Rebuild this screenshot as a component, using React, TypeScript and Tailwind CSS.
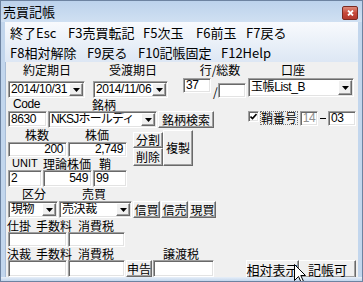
import React from 'react';

const sunk =
  'bg-white border border-t-[#a0a0a0] border-l-[#a0a0a0] border-r-white border-b-white shadow-[inset_1px_1px_0_#696969,inset_-1px_-1px_0_#e3e3e3] flex items-center overflow-hidden shrink-0';
const raised =
  'bg-[#f0f0f0] border border-t-white border-l-white border-r-[#696969] border-b-[#696969] shadow-[inset_-1px_-1px_0_#a0a0a0] flex items-center justify-center shrink-0 whitespace-nowrap';
const num = "font-['Liberation_Sans','Noto_Sans_CJK_JP',sans-serif] text-[12px] leading-[13px] tracking-[-0.4px]";

const DropBtn = () => (
  <div className={`${raised} w-[14px] h-full`}>
    <svg width="7" height="4" viewBox="0 0 7 4">
      <path d="M0 0h7L3.5 4z" fill="#000" />
    </svg>
  </div>
);

const Combo = ({ className, text, textClass = '' }: { className: string; text: string; textClass?: string }) => (
  <div className={`${sunk} ${className} p-[1px] pl-[2px] items-stretch`}>
    <div className={`${num} ${textClass} flex-1 flex items-center whitespace-nowrap overflow-hidden`}>{text}</div>
    <DropBtn />
  </div>
);

const Field = ({ className, text = '', right = false }: { className: string; text?: string; right?: boolean }) => (
  <div className={`${sunk} ${className} ${right ? 'justify-end pr-[3px]' : 'pl-[2px]'}`}>
    <span className={`${num} text-black`}>{text}</span>
  </div>
);

const Btn = ({ className, text }: { className: string; text: string }) => (
  <div className={`${raised} ${className} text-[12px] leading-none`}>{text}</div>
);

const Label = ({ className, text }: { className: string; text: string }) => (
  <span className={`${className} text-[12px] leading-none whitespace-nowrap text-center shrink-0`}>{text}</span>
);

export default function App() {
  return (
    <div className="w-[363px] h-[282px] relative overflow-hidden bg-[#c2d6ed] border border-[#6d83a1] flex flex-col text-black font-['Noto_Sans_CJK_JP',sans-serif]">
      {/* title bar */}
      <div className="h-[21px] shrink-0 flex items-center pl-[2px] bg-gradient-to-b from-[#bcd2ec] to-[#d0e0f2] relative">
        <span className="text-[13px] leading-none">売買記帳</span>
        <div className="absolute right-[4px] top-[5px] w-[16px] h-[14px] rounded-[2px] border border-[#7a2a22] bg-gradient-to-b from-[#dc8a7c] via-[#c6483a] to-[#b33a2e] flex items-center justify-center">
          <svg width="7" height="6" viewBox="0 0 7 6">
            <path d="M1 0.5L6 5.5M6 0.5L1 5.5" stroke="#fff" strokeWidth="1.8" />
          </svg>
        </div>
      </div>

      <div className="mx-[4px] flex-1 flex flex-col">
        {/* menu */}
        <div className="h-[40px] shrink-0 flex flex-col bg-gradient-to-b from-[#f8fafd] to-[#dde7f4] text-[13px] leading-none">
          <div className="h-[20px] flex items-center pl-[5px]">
            <span className="w-[58px]">終了Esc</span>
            <span className="w-[75px]">F3売買転記</span>
            <span className="w-[53px]">F5次玉</span>
            <span className="w-[50px]">F6前玉</span>
            <span>F7戻る</span>
          </div>
          <div className="h-[20px] flex items-center pl-[5px]">
            <span className="w-[77px]">F8相対解除</span>
            <span className="w-[51px]">F9戻る</span>
            <span className="w-[83px]">F10記帳固定</span>
            <span>F12Help</span>
          </div>
        </div>

        {/* form */}
        <div className="flex-1 bg-[#f0f0f0] flex flex-col border-l border-[#a9bdd6]">
          <div className="h-[16px] flex items-center">
            <Label className="ml-[17px] w-[48px]" text="約定期日" />
            <Label className="ml-[38px] w-[48px]" text="受渡期日" />
            <Label className="ml-[42px] w-[42px]" text="行/総数" />
            <Label className="ml-[40px] w-[24px]" text="口座" />
          </div>
          <div className="h-[20px] flex items-start">
            <Combo className="ml-[2px] mt-[3px] w-[77px] h-[17px]" text="2014/10/31" />
            <Combo className="ml-[8px] mt-[3px] w-[75px] h-[17px]" text="2014/11/06" />
            <Field className="ml-[15px] w-[28px] h-[15px]" text="37" />
            <span className="ml-[2px] mt-[8px] w-[5px] text-[12px] leading-none">/</span>
            <Field className="w-[28px] mt-[5px] h-[15px]" />
            <Combo className="ml-[2px] w-[106px] h-[19px]" text="玉帳List_B" />
          </div>
          <div className="h-[13px] flex items-center">
            <span className={`${num} ml-[7px] w-[30px]`}>Code</span>
            <Label className="ml-[49px] w-[24px]" text="銘柄" />
          </div>
          <div className="h-[17px] flex items-start">
            <Field className="ml-[2px] w-[39px] h-[16px]" text="8630" />
            <Combo className="ml-[1px] w-[109px] h-[17px]" text="NKSJホールディ" textClass="text-[11.5px] tracking-[-0.8px]" />
            <Btn className="ml-[1px] w-[56px] h-[17px]" text="銘柄検索" />
            <div className={`${sunk} ml-[34px] w-[11px] h-[11px] justify-center`}>
              <svg width="7" height="7" viewBox="0 0 7 7">
                <path d="M0.5 3.5L2.5 5.5L6.5 1" stroke="#000" strokeWidth="1.6" fill="none" />
              </svg>
            </div>
            <span className="ml-[1px] w-[38px] text-[12px] leading-[12px] text-center border border-dotted border-[#777]">鞘番号</span>
            <div className={`${sunk} ml-[2px] w-[18px] h-[15px] justify-center`}>
              <span className={`${num} text-[#909090]`}>14</span>
            </div>
            <span className="ml-[2px] mt-[7px] w-[6px] h-[1px] bg-black" />
            <Field className="ml-[2px] w-[28px] h-[15px]" text="03" />
          </div>

          <div className="h-[59px] flex items-start">
            <div className="flex flex-col w-[123px]">
              <div className="h-[14px] flex items-center">
                <Label className="ml-[19px] w-[24px]" text="株数" />
                <Label className="ml-[36px] w-[24px]" text="株価" />
              </div>
              <div className="h-[15px] flex">
                <Field className="ml-[2px] w-[59px] h-[15px]" text="200" right />
                <Field className="ml-[1px] w-[59px] h-[15px]" text="2,749" right />
              </div>
              <div className="h-[13px] flex items-center">
                <span className="font-['Liberation_Sans',sans-serif] text-[11px] leading-none ml-[6px] w-[27px] shrink-0">UNIT</span>
                <Label className="ml-[4px] w-[48px]" text="理論株価" />
                <Label className="ml-[8px] w-[12px]" text="鞘" />
              </div>
              <div className="h-[17px] flex">
                <Field className="ml-[2px] w-[34px] h-[17px]" text="2" />
                <Field className="ml-[1px] w-[49px] h-[17px]" text="549" right />
                <Field className="ml-[1px] w-[34px] h-[17px]" text="99" />
              </div>
            </div>
            <div className="flex flex-col ml-[4px] mt-[4px]">
              <Btn className="w-[30px] h-[16px]" text="分割" />
              <Btn className="w-[30px] h-[18px]" text="削除" />
            </div>
            <Btn className="mt-[2px] w-[30px] h-[36px]" text="複製" />
          </div>

          <div className="h-[14px] flex items-center">
            <Label className="ml-[16px] w-[24px]" text="区分" />
            <Label className="ml-[36px] w-[24px]" text="売買" />
          </div>
          <div className="h-[17px] flex">
            <Combo className="ml-[2px] w-[50px] h-[17px]" text="現物" />
            <Combo className="ml-[1px] w-[73px] h-[17px]" text="売決裁" />
            <Btn className="ml-[1px] w-[27px] h-[17px]" text="信買" />
            <Btn className="ml-[1px] w-[27px] h-[17px]" text="信売" />
            <Btn className="ml-[1px] w-[27px] h-[17px]" text="現買" />
          </div>
          <div className="h-[14px] flex items-end text-[12px] leading-none">
            <span className="ml-[1px]">仕掛</span>
            <span className="ml-[5px]">手数料</span>
            <span className="ml-[6px]">消費税</span>
          </div>
          <div className="h-[15px] flex">
            <Field className="ml-[2px] w-[59px] h-[15px]" />
            <Field className="ml-[1px] w-[57px] h-[15px]" />
          </div>
          <div className="h-[13px] flex items-center text-[12px] leading-none">
            <span className="ml-[1px]">決裁</span>
            <span className="ml-[5px]">手数料</span>
            <span className="ml-[6px]">消費税</span>
            <span className="ml-[49px]">譲渡税</span>
          </div>
          <div className="h-[17px] flex">
            <Field className="ml-[2px] w-[59px] h-[17px]" />
            <Field className="ml-[1px] w-[57px] h-[17px]" />
            <Btn className="ml-[1px] w-[26px] h-[17px]" text="申告" />
            <Field className="ml-[1px] w-[61px] h-[17px]" />
            <Btn className="ml-[32px] w-[53px] h-[18px] text-[13px]" text="相対表示" />
            <Btn className="w-[57px] h-[18px] text-[13px]" text="記帳可" />
          </div>
        </div>
      </div>
      <div className="h-[4px] shrink-0 bg-gradient-to-b from-[#e8eff8] to-[#c2d6ed]" />

      {/* mouse pointer */}
      <svg className="absolute left-[293px] top-[263px]" width="13" height="20" viewBox="0 0 13 20">
        <path d="M0.5 0.5V16.5L4.5 12.5L7.5 19L9.8 18L6.8 11.5H11.5Z" fill="#fff" stroke="#000" strokeWidth="1" />
      </svg>
    </div>
  );
}
